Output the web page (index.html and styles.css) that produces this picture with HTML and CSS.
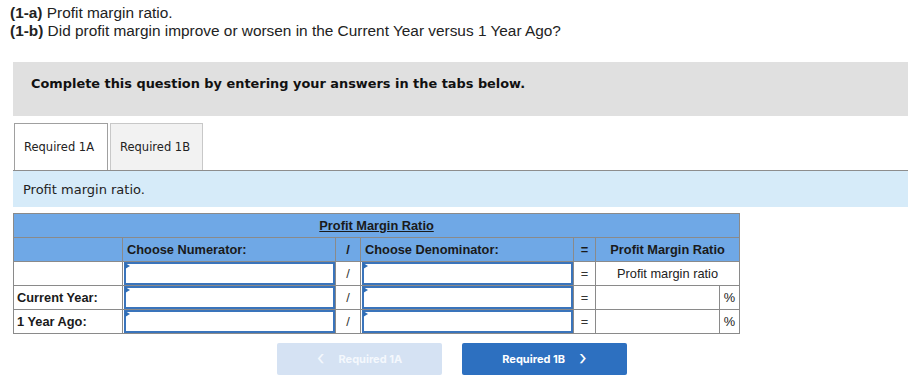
FILE: index.html
```html
<!DOCTYPE html>
<html>
<head>
<meta charset="utf-8">
<link rel="stylesheet" href="styles.css">
</head>
<body>
<div class="intro">
  <div><b>(1-a)</b> Profit margin ratio.</div>
  <div><b>(1-b)</b> Did profit margin improve or worsen in the Current Year versus 1 Year Ago?</div>
</div>
<div class="wrap">
  <div class="notice">Complete this question by entering your answers in the tabs below.</div>
  <div class="tabs">
    <div class="tab active">Required 1A</div>
    <div class="tab">Required 1B</div>
  </div>
  <div class="panel">Profit margin ratio.</div>
  <table class="grid">
    <colgroup>
      <col class="c-label"><col class="c-num"><col class="c-op"><col class="c-den"><col class="c-eq"><col class="c-res"><col class="c-pct">
    </colgroup>
    <tr class="hd">
      <th colspan="7" class="title"><span>Profit Margin Ratio</span></th>
    </tr>
    <tr class="hd">
      <th></th>
      <th class="left">Choose Numerator:</th>
      <th>/</th>
      <th class="left">Choose Denominator:</th>
      <th>=</th>
      <th colspan="2">Profit Margin Ratio</th>
    </tr>
    <tr>
      <td></td>
      <td class="in"><div class="box"></div></td>
      <td class="op">/</td>
      <td class="in"><div class="box"></div></td>
      <td class="op">=</td>
      <td colspan="2" class="res">Profit margin ratio</td>
    </tr>
    <tr>
      <td class="lab">Current Year:</td>
      <td class="in"><div class="box"></div></td>
      <td class="op">/</td>
      <td class="in"><div class="box"></div></td>
      <td class="op">=</td>
      <td></td>
      <td class="pct">%</td>
    </tr>
    <tr>
      <td class="lab">1 Year Ago:</td>
      <td class="in"><div class="box"></div></td>
      <td class="op">/</td>
      <td class="in"><div class="box"></div></td>
      <td class="op">=</td>
      <td></td>
      <td class="pct">%</td>
    </tr>
  </table>
  <div class="nav">
    <button class="btn prev"><span class="chev">&lsaquo;</span>Required 1A</button>
    <button class="btn next">Required 1B<span class="chev">&rsaquo;</span></button>
  </div>
</div>
</body>
</html>
```

FILE: styles.css
```css
* { box-sizing: border-box; }
body {
  margin: 0;
  background: #fff;
  color: #1a1a1a;
  font-family: "Liberation Sans", Arial, sans-serif;
}
.intro {
  padding: 4px 0 0 10px;
  font-family: "Liberation Sans", Arial, sans-serif;
  font-size: 15.4px;
  line-height: 18px;
  color: #222;
}
.intro b { font-weight: 700; }
.wrap {
  padding-left: 13px;
  width: 908px;
}
.notice {
  margin-top: 22px;
  height: 54px;
  background: #e0e0e0;
  padding: 14px 0 0 18px;
  font-family: "DejaVu Sans", Verdana, sans-serif;
  font-weight: bold;
  font-size: 12.9px;
  line-height: 16px;
  color: #111;
}
.tabs {
  display: flex;
  gap: 2px;
  margin-top: 7px;
  padding-left: 1px;
  height: 47px;
}
.tab {
  height: 47px;
  padding: 0 9px;
  display: flex;
  align-items: center;
  font-family: "DejaVu Sans", Verdana, sans-serif;
  font-size: 11.5px;
  color: #222;
  background: #f2f2f2;
  border: 1px solid #c8c8c8;
  border-bottom: none;
}
.tab.active {
  background: #fff;
  border-color: #a0a0a0;
  width: 94px;
}
.tab:not(.active) { width: 93px; }
.panel {
  height: 37px;
  border-top: 1px solid #8d8d8d;
  background: #d6ebf9;
  padding-left: 10px;
  display: flex;
  align-items: center;
  font-family: "DejaVu Sans", Verdana, sans-serif;
  font-size: 13px;
  color: #222;
}
.grid {
  margin-top: 6px;
  border-collapse: collapse;
  width: 726px;
  table-layout: fixed;
  font-size: 12.8px;
}
.c-label { width: 109px; }
.c-num { width: 213px; }
.c-op { width: 25px; }
.c-den { width: 213px; }
.c-eq { width: 22px; }
.c-res { width: 124px; }
.c-pct { width: 20px; }
.grid th, .grid td {
  border: 1px solid #8a8a8a;
  height: 24px;
  padding: 0;
}
.grid tr.hd th {
  background: #6fa8e6;
  font-weight: bold;
  color: #1a1a1a;
  text-align: center;
}
.grid tr.hd th.left { text-align: left; padding-left: 4px; }
.grid th.title span {
  text-decoration: underline;
}
.grid td.lab {
  font-weight: bold;
  padding-left: 3px;
}
.grid td.op { text-align: center; color: #333; }
.grid td.res { text-align: center; color: #222; }
.grid td.pct { text-align: center; }
.grid td.in { padding: 0; position: relative; }
.box {
  height: 23px;
  margin: 0 0 0 1px;
  border: 2px solid #3a74bb;
  background: #fff;
  position: relative;
}
.box::before {
  content: "";
  position: absolute;
  left: -1px;
  top: -1px;
  border-left: 5px solid #2f6db5;
  border-top: 3px solid transparent;
  border-bottom: 3px solid transparent;
}
.nav {
  display: flex;
  gap: 20px;
  margin-top: 9px;
  padding-left: 264px;
}
.btn {
  width: 165px;
  height: 32px;
  border: none;
  border-radius: 2px;
  color: #fff;
  font-family: "Inter", "Liberation Sans", sans-serif;
  font-weight: bold;
  font-size: 11px;
  display: flex;
  align-items: center;
  justify-content: center;
  gap: 14px;
}
.btn.prev { background: #d5e2f3; color: #f4f8fd; }
.btn.next { background: #2d70c0; }
.chev { font-size: 20px; font-weight: normal; line-height: 1; margin-top: -3px; }
```
